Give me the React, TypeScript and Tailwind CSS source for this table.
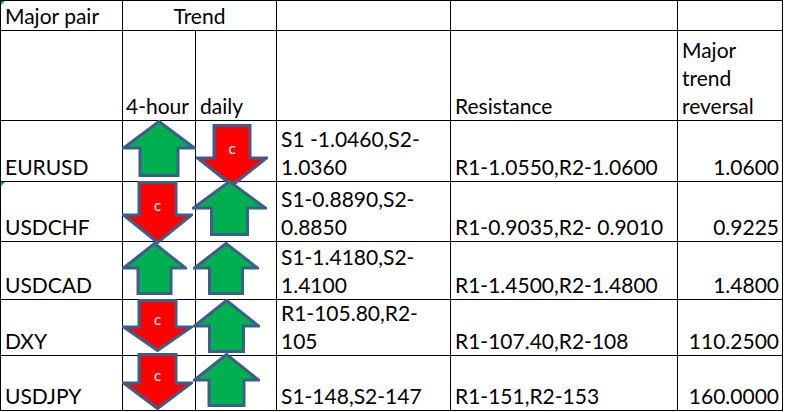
type Arrow = {
  x: number;
  y: number;
  w: number;
  h: number;
  head: number;
  shaft: number;
  dir: "up" | "down";
};

const ARROWS: Arrow[] = [
  { x: 122, y: 120, w: 74, h: 57, head: 28, shaft: 38, dir: "up" },
  { x: 196, y: 124, w: 72, h: 63, head: 29, shaft: 36, dir: "down" },
  { x: 192, y: 180, w: 75, h: 56, head: 28, shaft: 36, dir: "up" },
  { x: 122, y: 181, w: 71, h: 63, head: 29, shaft: 37, dir: "down" },
  { x: 122, y: 242, w: 65, h: 53, head: 26, shaft: 33, dir: "up" },
  { x: 193, y: 242, w: 66, h: 53, head: 26, shaft: 33, dir: "up" },
  { x: 122, y: 299, w: 71, h: 53, head: 25, shaft: 37, dir: "down" },
  { x: 193, y: 299, w: 67, h: 54, head: 27, shaft: 34, dir: "up" },
  { x: 122, y: 353, w: 71, h: 57, head: 27, shaft: 37, dir: "down" },
  { x: 193, y: 353, w: 67, h: 54, head: 27, shaft: 35, dir: "up" },
];

const ROWS = [
  { pair: "EURUSD", support: ["S1 -1.0460,S2-", "1.0360"], resist: "R1-1.0550,R2-1.0600", rev: "1.0600" },
  { pair: "USDCHF", support: ["S1-0.8890,S2-", "0.8850"], resist: "R1-0.9035,R2- 0.9010", rev: "0.9225" },
  { pair: "USDCAD", support: ["S1-1.4180,S2-", "1.4100"], resist: "R1-1.4500,R2-1.4800", rev: "1.4800" },
  { pair: "DXY", support: ["R1-105.80,R2-", "105"], resist: "R1-107.40,R2-108", rev: "110.2500" },
  { pair: "USDJPY", support: ["S1-148,S2-147"], resist: "R1-151,R2-153", rev: "160.0000" },
];

function TrendArrow({ a }: { a: Arrow }) {
  const s = 1.5;
  const { w, h, head, shaft } = a;
  const l = w / 2 - shaft / 2;
  const r = w / 2 + shaft / 2;
  const up: [number, number][] = [
    [w / 2, s],
    [w - s, head],
    [r, head],
    [r, h - s],
    [l, h - s],
    [l, head],
    [s, head],
  ];
  const pts = (a.dir === "up" ? up : up.map(([px, py]) => [px, h - py] as [number, number]))
    .map(([px, py]) => `${px},${py}`)
    .join(" ");
  return (
    <div className="absolute" style={{ left: a.x, top: a.y, width: w, height: h }}>
      <svg width={w} height={h} viewBox={`0 0 ${w} ${h}`} className="block">
        <polygon
          points={pts}
          fill={a.dir === "up" ? "#00b050" : "#ff0000"}
          stroke="#3c5e8c"
          strokeWidth={3}
          strokeLinejoin="miter"
        />
      </svg>
      {a.dir === "down" && (
        <span
          className="absolute left-0 right-0 text-center text-white text-[15px] leading-[16px]"
          style={{ top: h * 0.42 - 10 }}
        >
          c
        </span>
      )}
    </div>
  );
}

const cell = "border-r border-b border-black flex items-end px-[4px] whitespace-nowrap";

export default function App() {
  return (
    <div className="relative w-[790px] h-[412px] bg-white overflow-hidden font-['Lato',sans-serif] text-[21px] leading-[28px] text-black">
      <div className="grid grid-cols-[122px_73px_81px_174px_227px_105px] grid-rows-[30px_90px_61px_60px_58px_56px_55px] border-l border-t border-black w-max">
        {/* header */}
        <div className={cell}>Major pair</div>
        <div className={`${cell} col-span-2 justify-center`}>Trend</div>
        <div className={cell} />
        <div className={cell} />
        <div className={cell} />

        <div className={cell} />
        <div className={`${cell} pl-[3px]`}>4-hour</div>
        <div className={cell}>daily</div>
        <div className={cell} />
        <div className={cell}>Resistance</div>
        <div className={cell}>
          <span>
            Major
            <br />
            trend
            <br />
            reversal
          </span>
        </div>

        {/* data rows */}
        {ROWS.map((row) => (
          <div key={row.pair} className="contents">
            <div className={cell}>{row.pair}</div>
            <div className={cell} />
            <div className={cell} />
            <div className={cell}>
              <span>
                {row.support.map((line, i) => (
                  <span key={i} className="block">
                    {line}
                  </span>
                ))}
              </span>
            </div>
            <div className={cell}>{row.resist}</div>
            <div className={`${cell} justify-end pr-[3px]`}>{row.rev}</div>
          </div>
        ))}
      </div>

      {/* excel error markers */}
      <div className="absolute left-[1px] top-[1px] w-0 h-0 border-t-[4px] border-r-[4px] border-t-[#12a52a] border-r-transparent" />
      <div className="absolute left-[1px] top-[182px] w-0 h-0 border-t-[4px] border-r-[4px] border-t-[#12a52a] border-r-transparent" />

      {ARROWS.map((a, i) => (
        <TrendArrow key={i} a={a} />
      ))}
    </div>
  );
}
